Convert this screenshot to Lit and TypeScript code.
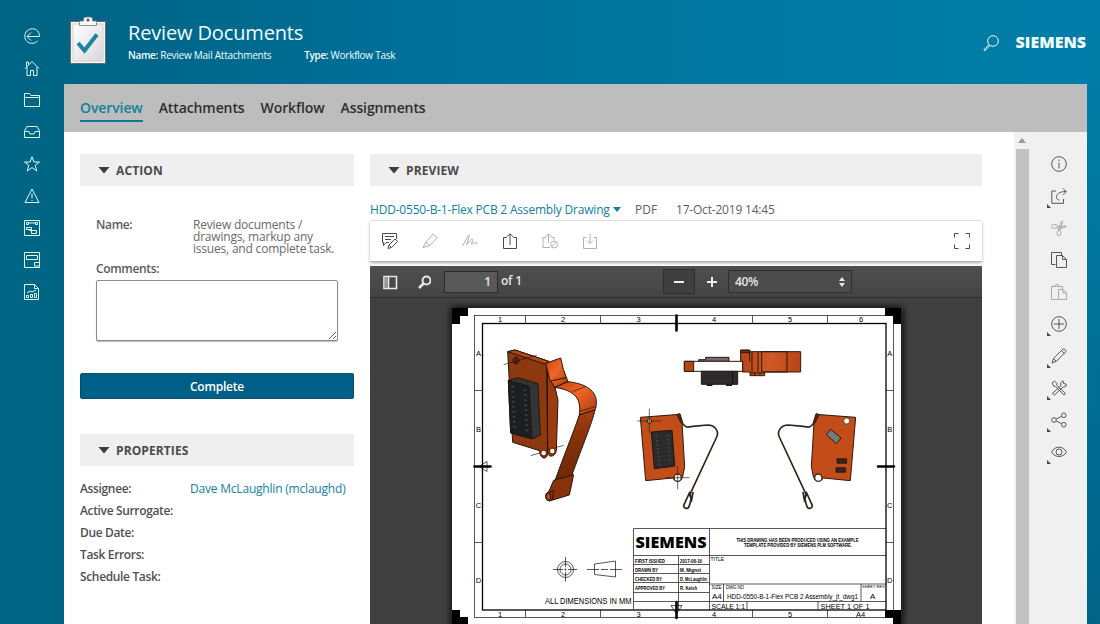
import { LitElement, html, css, svg } from "lit";
import { customElement, property } from "lit/decorators.js";

const icons: Record<string, unknown> = {
  back: svg`<path d="M3 8.5H15.3C15.8 4 12.5 .8 8.5 .8C4.300 .8 .8 4 .8 8.200C.8 12.500 4 15.300 8 15.300C10.500 15.300 12.500 14.300 13.800 12.800M7 4.500L3 8.500L7 12.500"/>`,
  home: svg`<path d="M1 8.500L8 1.500L15 8.500M3 7V15.500H6.500V10.500H9.500V15.500H13V7M2.500 6.500V2H4.500V4.500"/>`,
  folder: svg`<path d="M.5 14.500V1.500H5.500L7 3.500H15.500V14.500ZM.5 5.500H15.500"/>`,
  inbox: svg`<path d="M.5 13.500V7L3 2.500H13L15.500 7V13.500ZM.5 7.500H5L6 10H10L11 7.500H15.500"/>`,
  star: svg`<path d="M8 .8L10 6H15.500L11.200 9.300L12.800 15L8 11.600L3.200 15L4.800 9.300L.5 6H6Z"/>`,
  warn: svg`<path d="M8 1L15 14.500H1ZM8 5.500V10.500M8 12V13"/>`,
  flow: svg`<path d="M.5 .5H15.500V15.500H.5ZM4 3H12M2.500 2.500H4.500V4.500H2.500ZM11.500 2.500H13.500V4.500H11.500ZM2.500 7.500H7.500V9.500H2.500ZM5.500 9.500V10.500H10M7.500 10.500H12.500V13.500H7.500Z"/>`,
  card: svg`<path d="M.5 .5H15.500V15.500H.5ZM2.500 3.500H13.500V7.500H2.500ZM10.500 10.500H15.500V14H10.500Z"/>`,
  report: svg`<path d="M.5 .5H10.500L14.500 4.500V15.500H.5ZM10.500 .5V4.500H14.500M2.500 11.500H4.500V13.500H2.500ZM6.500 10.500H8.500V13.500H6.500ZM10.500 9.500H12.500V13.500H10.500ZM3 9L6 7L8 8L12 6"/>`,
  search: svg`<circle cx="10" cy="6" r="5.300"/><path d="M6 9.500L.8 15L1.800 15.800L7 10.600"/>`,
  info: svg`<circle cx="8" cy="8" r="7.300"/><path d="M8 6.500V12.500M8 3.500V5"/>`,
  shareout: svg`<path d="M5 3H.8V15.300H12.500V11M15 3.500C8 3.500 5 6.500 5.500 9.500C5.700 11 7 12 8.500 12M12 .5L15.300 3.500L12 6.800"/>`,
  cut: svg`<ellipse cx="3.500" cy="6.500" rx="3" ry="2"/><ellipse cx="8" cy="13" rx="2" ry="2.700"/><path d="M6.500 6.500L15.500 6L14 7.500L6 8.500M7.500 10.500L9.500 3L11.500 .8L11 4L9 10.500"/>`,
  copy: svg`<path d="M4.500 12.500H.5V.5H10.500V3.500M5.500 3.500H11.500L15.500 7.500V15.500H5.500ZM11.500 3.500V7.500H15.500"/>`,
  paste: svg`<path d="M7 15.500H.5V2.500H3.500M8.500 2.500H11.500V5M3 2.500L4.500 .7H7.500L9 2.500ZM7.500 5.500H12L15.500 9V15.500H7.500ZM12 5.500V9H15.500"/>`,
  add: svg`<circle cx="8" cy="8" r="7.300"/><path d="M8 3V13M3 8H13"/>`,
  edit: svg`<path d="M1 15L2.500 10.500L12 1C13 .2 15.500 2.500 14.800 3.800L5.300 13.300ZM2.500 10.500L5.300 13.300M10.500 2.500L13.300 5.300"/>`,
  tools: svg`<path d="M1 3L3.500 1L6 3.500L5.500 5L14.500 13.500L13 15L4.500 6.500L3 6.500ZM10 6.500L9.500 3L12 .8L12.500 3.500L15 4L15.300 6L11.500 7.500L3.500 15L1.300 13.500L9.500 6"/>`,
  nodes: svg`<circle cx="3" cy="8" r="2.300"/><circle cx="12.800" cy="3.300" r="2.300"/><circle cx="12.800" cy="12.700" r="2.300"/><path d="M5.200 7L10.700 4.300M5.200 9L10.700 11.700"/>`,
  eye: svg`<path d="M.5 8C4 1.500 12 1.500 15.500 8C12 14 4 14 .5 8Z"/><circle cx="8" cy="8" r="3"/>`,
  note: svg`<path d="M7 9.500H4L1.500 12.500V9.500H.5V.5H14.500V6M3 3.500H12M3 6.500H9M6 15.500L7 12L13 6L15.500 8.500L9.500 14.500ZM7 12L9.500 14.500"/>`,
  marker: svg`<path d="M1 14.500L4 9L11 1L15 4.500L8 12.500L1 14.500ZM4 9L8 12.500"/>`,
  ink: svg`<path d="M.5 13L6 3C7 1.500 8 2 7 4.500L4.500 12L9 6.500C10 5.500 11 6 10.500 7.500L9.500 11C10 12 12 8.500 13 9C13.500 9.500 13 11 14 11L15.500 10"/>`,
  up: svg`<path d="M4.500 4.500H1.500V15.500H14.500V4.500H11.500M8 12V1M4.500 4L8 .8L11.500 4"/>`,
  upblock: svg`<path d="M4 4.500H1V14.500H8M6.500 10V1M3.500 4L6.500 .8L9.500 4M9.500 4.500H12V7"/><circle cx="12" cy="11.500" r="3.500"/><path d="M9.500 14L14.500 9"/>`,
  down: svg`<path d="M4.500 4.500H1.500V15.500H14.500V4.500H11.500M8 .5V10M5 7.500L8 10.500L11 7.500"/>`,
  full: svg`<path d="M.5 4.500V.5H4.500M11.500 .5H15.500V4.500M15.500 11.500V15.500H11.500M4.500 15.500H.5V11.500"/>`,
};

@customElement("ui-icon")
class UiIcon extends LitElement {
  @property() name = "";
  static styles = css`
    :host { display: block; width: 16px; height: 16px; flex: none; }
    svg { display: block; width: 16px; height: 16px; overflow: visible; fill: none; stroke: currentColor; stroke-width: 1; }
  `;
  render() {
    return html`<svg viewBox="0 0 16 16">${icons[this.name]}</svg>`;
  }
}

@customElement("assembly-drawing")
class AssemblyDrawing extends LitElement {
  static styles = css`
    :host { display: block; }
    svg { display: block; width: 612px; height: 326px; }
    text { font-family: "Liberation Sans", Arial, sans-serif; fill: #000; }
    .zone { font-size: 7.5px; text-anchor: middle; }
    .brand { font-family: "Open Sans", sans-serif; font-weight: 800; }
    .cell { font-size: 4.600px; font-weight: 700; }
    .hair { fill: none; stroke: #111; stroke-width: .7; }
    .heavy { fill: none; stroke: #000; stroke-width: 1.300; }
  `;
  render() {
    const zones = [[500, "1"], [563, "2"], [638.500, "3"], [714, "4"], [790, "5"]] as const;
    const rows = [[353, "A"], [429, "B"], [504.500, "C"], [580, "D"]] as const;
    const cells = [
      [562.500, "FIRST ISSUED", 30, "2017-08-16", 22],
      [571.500, "DRAWN BY", 23, "M. Mignot", 21],
      [580.500, "CHECKED BY", 27, "D. McLaughlin", 27],
      [589.500, "APPROVED BY", 30, "R. Kelsh", 17],
    ] as const;
    return html`<svg viewBox="370 298 612 326">
      <defs>
        <linearGradient id="bend" x1="0" y1="0" x2="1" y2="1"><stop offset="0" stop-color="#c2410c"/><stop offset=".45" stop-color="#f0662a"/><stop offset="1" stop-color="#a83a0b"/></linearGradient>
        <linearGradient id="arm" x1="0" y1="0" x2="0" y2="1"><stop offset="0" stop-color="#a8400f"/><stop offset=".3" stop-color="#8a340b"/><stop offset="1" stop-color="#6b2806"/></linearGradient>
        <linearGradient id="band" x1="0" y1="0" x2="1" y2="0"><stop offset="0" stop-color="#b84414"/><stop offset=".5" stop-color="#d05a26"/><stop offset="1" stop-color="#b84414"/></linearGradient>
        <filter id="shade" x="-5%" y="-5%" width="110%" height="110%"><feGaussianBlur stdDeviation="3"/></filter>
      </defs>
      <rect x="451" y="307" width="452" height="320" fill="#111" filter="url(#shade)"/>
      <rect x="452" y="308" width="449" height="318" fill="#fff"/>
      <path d="M452 308H468V316H460V324H452ZM901 308V324H893V316H885V308ZM452 610H460V617H468V626H452ZM901 610H885V618H893V626H901Z"/>
      <rect class="hair" x="474.500" y="315.500" width="419" height="302"/>
      <rect class="heavy" x="482.500" y="323.500" width="403.500" height="286.500"/>
      <path class="hair" d="M525.500 315.500V323M600.500 315.500V323M752.500 315.500V323M827.500 315.500V323M525.500 610V617M600.500 610V617M752.500 610V617M827.500 610V617M474.500 390.500H482M474.500 542.500H482M886 390.500H893M886 542.500H893"/>
      <path d="M676.500 315.500V330.500M474.500 466.500H490.500M878 466.500H894M676.500 602V618" stroke="#000" stroke-width="2.600" stroke-linecap="round"/>
      <path class="hair" d="M479 466.500L487 461.500V471.500ZM671 605.500H682L676.500 614Z" stroke-width="1"/>
      ${zones.map(([x, t]) => svg`<text class="zone" x=${x} y="322">${t}</text><text class="zone" x=${x} y="616.500">${t}</text>`)}
      <text class="zone" x="861" y="322">6</text><text class="zone" x="860.500" y="616.500">A4</text>
      ${rows.map(([y, t]) => svg`<text class="zone" x="478.500" y=${y + 3}>${t}</text><text class="zone" x="889.800" y=${y + 3}>${t}</text>`)}

      <g transform="translate(440 300) scale(.33333)" stroke="#25150c" stroke-width="3" stroke-linejoin="round">
        <path d="M320 186L345 262L354 300L349 450C348 472 322 475 323 455Z" fill="#9a3c0e"/>
        <path d="M203 155L225 150L322 183L323 462C318 485 298 472 299 452L218 427Z" fill="#8d390f"/>
        <path d="M203 155L225 150L327 184L320 194Z" fill="#b8480f"/>
        <path d="M320 186L323 460" fill="none"/>
        <circle cx="311" cy="459" r="9" fill="#fff" stroke="#7a3210" stroke-width="5"/>
        <circle cx="337" cy="453" r="9" fill="#fff" stroke="#7a3210" stroke-width="5"/>
        <circle cx="228" cy="182" r="9" fill="#702b0b"/>
        <path d="M191 194L290 166M272 467L300 459M346 443L371 436M228 168V196" fill="none" stroke-width="2"/>
        <path d="M205 241L233 233L294 251L301 404L278 417L212 399Z" fill="#303538"/>
        <path d="M205 241L267 259L276 416L212 399Z" fill="#1c1f21"/>
        <path d="M218 258L224 388M254 268L262 400" stroke="#3c4144" stroke-width="8" stroke-dasharray="5 10"/>
        <path d="M317 190L362 174L370 208L384 245L344 262L329 238Z" fill="url(#bend)"/>
        <path d="M331 243L379 233" fill="none"/>
        <path d="M344 262L384 245C440 251 469 274 469 306C469 318 468 324 465 330L418 345C424 300 410 272 344 262Z" fill="url(#bend)"/>
        <path d="M397 275L436 260M419 334L466 320" fill="none" stroke-width="2"/>
        <path d="M418 345L465 330C456 370 430 430 393 533L343 548C370 470 396 410 418 345Z" fill="url(#arm)"/>
        <path d="M341 541L391 527L401 524L388 585L328 603C314 602 313 578 326 576Z" fill="#87330c"/>
        <path d="M326 577L341 572L337 600" fill="none"/>
        <ellipse cx="325" cy="590" rx="7" ry="11" fill="#b84a1a"/>
      </g>

      <g transform="translate(670 300) scale(.33333)" stroke="#2b1a10" stroke-width="3">
        <path d="M86 184V179H107V172H177V184Z" fill="#6d6d6d"/>
        <path d="M43 184H218V214H43Z" fill="#fff"/><path d="M43 184H71V214H43Z" fill="#b64512"/>
        <path d="M94 214H203V253H94Z" fill="#2d2b2b"/><path d="M110 255H127M168 255H186" stroke-width="6"/>
        <path d="M188 214V253" stroke="#111"/>
        <path d="M212 150H239V155H392V216H284V227H240V216H218V184H212Z" fill="url(#band)"/>
        <path d="M275 155H351V216H275ZM246 155V216M264 155V216M240 219H284M254 218V227M270 218V227M239 155V185" fill="none"/>
        <path d="M212 151H239V158H212Z" fill="#74310f"/>
      </g>

      <g transform="translate(670 300) scale(.33333)" stroke-linejoin="round">
        <g id="leaf">
          <path d="M437 343L557 352L541 542L460 534A16 16 0 0 1 430 530L424 500L432 367Z" fill="#c24d19" stroke="#2b1a10" stroke-width="3"/>
          <path d="M429 367L440 340L448 344L435 370Z" fill="#4c2815" stroke="#2b1a10" stroke-width="2"/>
          <path d="M431 370C420 385 415 382 400 379L355 375C333 375 320 394 328 411L410 587" fill="none" stroke="#30241d" stroke-width="5"/>
          <path d="M399 578L411 620A8 8 0 0 0 426 614L409 577L404 604Z" fill="#fff" stroke="#30241d" stroke-width="5"/>
        </g>
        <circle cx="530" cy="363" r="9" fill="#fff" stroke="#2b1a10" stroke-width="2"/>
        <circle cx="445" cy="533" r="11" fill="#fff" stroke="#4d2913" stroke-width="4"/>
        <path d="M482 388L513 414L500 431L469 404Z" fill="#747b7e" stroke="#2b1a10" stroke-width="3"/>
        <path d="M501 476H530V490H501ZM498 503H527V517H498Z" fill="#332620" stroke="#1c120d" stroke-width="2"/>
      </g>
      <g transform="translate(826 300) scale(-.33333 .33333)" stroke-linejoin="round">
        <path d="M437 343L557 352L541 542L460 534A16 16 0 0 1 430 530L424 500L432 367Z" fill="#c24d19" stroke="#2b1a10" stroke-width="3"/>
        <path d="M429 367L440 340L448 344L435 370Z" fill="#4c2815" stroke="#2b1a10" stroke-width="2"/>
        <path d="M431 370C420 385 415 382 400 379L355 375C333 375 320 394 328 411L410 587" fill="none" stroke="#30241d" stroke-width="5"/>
        <path d="M399 578L411 620A8 8 0 0 0 426 614L409 577L404 604Z" fill="#fff" stroke="#30241d" stroke-width="5"/>
        <circle cx="530" cy="363" r="7" fill="#d4dca8" stroke="#2b1a10" stroke-width="3"/>
        <circle cx="445" cy="533" r="11" fill="#fff" stroke="#4d2913" stroke-width="4"/>
        <path d="M462 391L524 396L515 506L454 498Z" fill="#2c2b2b" stroke="#1a1410" stroke-width="3"/>
        <path d="M475 405L467 490M508 408L500 495" stroke="#4a4a4a" stroke-width="6" stroke-dasharray="4 8"/>
        <path d="M445 498V568M410 533H480M530 326V400M494 363H566" stroke="#222" stroke-width="2"/>
      </g>

      <g class="hair">
        <circle cx="565.500" cy="569.500" r="8"/><circle cx="565.500" cy="569.500" r="5.500"/>
        <path d="M553 569.500H563M564.500 569.500H566.500M568 569.500H577M565.500 557V567M565.500 568.500V570.500M565.500 572V581.500M594.500 564L615.500 561V577L594.500 574.500ZM587 569.500H599M601 569.500H608M610 569.500H622"/>
      </g>
      <text x="545" y="604" font-size="8.200" textLength="86.500" lengthAdjust="spacingAndGlyphs">ALL DIMENSIONS IN MM</text>

      <path class="hair" d="M633.500 609V528.500H886M709.500 528.500V610M633.500 555.500H886M633.500 564.500H709M633.500 573.500H709M633.500 582.500H709M633.500 592.500H709M633.500 601.500H886M678.500 555.500V610M709.500 584H886M723.500 584V601.500M861 584V601.500M747 601.500V610M818 601.500V610"/>
      <text class="brand" x="635.500" y="548" font-size="15.500" textLength="71" lengthAdjust="spacingAndGlyphs">SIEMENS</text>
      <text class="cell" x="736.500" y="541.500" textLength="122" lengthAdjust="spacingAndGlyphs">THIS DRAWING HAS BEEN PRODUCED USING AN EXAMPLE</text>
      <text class="cell" x="744" y="546.800" textLength="108" lengthAdjust="spacingAndGlyphs">TEMPLATE PROVIDED BY SIEMENS PLM SOFTWARE.</text>
      ${cells.map(([y, a, aw, b, bw]) => svg`<text class="cell" x="635" y=${y} textLength=${aw} lengthAdjust="spacingAndGlyphs">${a}</text><text class="cell" x="680" y=${y} textLength=${bw} lengthAdjust="spacingAndGlyphs">${b}</text>`)}
      <text x="710.500" y="561" font-size="5">TITLE</text>
      <text x="711.500" y="588.500" font-size="4.500">SIZE</text>
      <text x="726" y="588.500" font-size="4.500" textLength="18">DWG NO</text>
      <text x="862" y="588.300" font-size="4.200" textLength="23" lengthAdjust="spacingAndGlyphs">SHEET REV</text>
      <text x="712" y="599" font-size="8">A4</text>
      <text x="727" y="599" font-size="8" textLength="131" lengthAdjust="spacingAndGlyphs">HDD-0550-B-1-Flex PCB 2 Assembly_jt_dwg1</text>
      <text x="870" y="599" font-size="8">A</text>
      <text x="711.500" y="608.500" font-size="8" textLength="33.500" lengthAdjust="spacingAndGlyphs">SCALE 1:1</text>
      <text x="820.500" y="608.500" font-size="8" textLength="49" lengthAdjust="spacingAndGlyphs">SHEET 1 OF 1</text>
    </svg>`;
  }
}

@customElement("app-root")
class AppRoot extends LitElement {
  static styles = css`
    :host { display: block; width: 1100px; height: 624px; overflow: hidden; font-family: "Open Sans", "Noto Sans", sans-serif; font-size: 12px; color: #464646; }
    * { box-sizing: border-box; }
    .app { display: grid; grid-template-columns: 64px 1023px 13px; width: 1100px; height: 624px;
      background: linear-gradient(90deg, #006485 0, #006485 70px, #007099 420px, #007ba5 900px, #007ea9 1100px); }
    .rail { display: flex; flex-direction: column; padding-top: 20px; color: #dcfbff; }
    .slot { height: 32px; display: flex; align-items: center; padding-left: 24px; }
    .edge { background: linear-gradient(#007ea9, #007aa3 25%, #006a92 75%, #006487); }
    .main { display: grid; grid-template-rows: 84px 48px 492px; }
    .top { display: flex; align-items: flex-start; color: #f0feff; }
    .clip { width: 36px; height: 48px; margin: 16px 0 0 6px; }
    .titles { margin: 18px 0 0 22px; flex: 1; white-space: nowrap; }
    .title { font-size: 20px; line-height: 30px; letter-spacing: -.15px; }
    .meta { display: flex; gap: 33px; font-size: 10px; line-height: 15px; letter-spacing: -.25px; }
    .meta b { font-weight: 600; letter-spacing: -.35px; }
    .top ui-icon { margin: 35px 17px 0 0; }
    .logo { font-size: 16px; line-height: 20px; font-weight: 800; letter-spacing: 0; margin: 32px 1px 0 0; }
    .tabs { background: #bdbdbd; display: flex; padding: 13px 16px 0; gap: 16px; font-size: 14px; line-height: 22px; font-weight: 600; color: #2e2e2e; letter-spacing: -.1px; }
    .tab { height: 25px; white-space: nowrap; }
    .tab.on { color: #12809c; border-bottom: 2px solid #0b7898; }
    .work { display: grid; grid-template-columns: 950px 16px 57px; background: #fff; }
    .body { display: grid; grid-template-columns: 274px 612px; column-gap: 16px; padding: 22px 16px 0; align-content: start; }
    .head { height: 32px; background: #efefef; display: flex; align-items: center; padding-left: 18px; gap: 6px; font-size: 12px; font-weight: 700; letter-spacing: .1px; color: #4a4a4a; }
    .tri { width: 12px; height: 7px; background: #3c3c3c; clip-path: polygon(0 0, 100% 0, 50% 100%); margin-right: 0; }
    .name { display: grid; grid-template-columns: 97px 150px; padding: 33px 0 0 16px; line-height: 12px; letter-spacing: -.2px; color: #6a6a6a; white-space: nowrap; }
    .lab { font-weight: 600; color: #5a5a5a; letter-spacing: -.35px; }
    .comments { padding: 8px 0 0 16px; line-height: 12px; }
    textarea { display: block; width: 242px; height: 61px; margin: 5px 0 0; border: 1px solid #8c8c8c; border-radius: 2px; box-shadow: 0 1px 1px #bbb; background: #fff; resize: both; padding: 2px; outline: none; }
    .btn { height: 26px; margin: 32px 0 35px; background: #005f87; border: 1px solid #00506f; border-radius: 2px; color: #fff; text-align: center; font-size: 12px; line-height: 25px; font-weight: 600; letter-spacing: -.2px; }
    .props { padding-top: 12px; line-height: 22px; letter-spacing: -.2px; }
    .prop { display: grid; grid-template-columns: 110px auto; white-space: nowrap; }
    .prop .lab { color: #505050; }
    .link { color: #1482a0; }
    .file { height: 35px; padding-top: 15px; display: flex; border-bottom: 1px solid #e8e8e8; line-height: 18px; white-space: nowrap; color: #606060; }
    .fname { color: #117f9e; letter-spacing: -.2px; width: 243px; }
    .caret { width: 8px; height: 5px; background: #117f9e; clip-path: polygon(0 0, 100% 0, 50% 100%); margin: 6px 14px 0 0; }
    .kind { width: 41px; }
    .date { letter-spacing: -.2px; }
    .tools { height: 41px; display: flex; align-items: center; padding: 0 12px; gap: 24px; border-bottom: 1px solid #b8b8b8; box-shadow: 0 1px 3px #aaa; color: #4a4a4a; }
    .tools .off { color: #b0b0b0; }
    .tools .last { margin-left: auto; }
    .viewer { margin-top: 4px; background: #404040; height: 358px; overflow: hidden; }
    .bar { height: 32px; display: flex; align-items: center; background: linear-gradient(#4f4f4f, #444); border-bottom: 1px solid #2e2e2e; color: #e6e6e6; font-weight: 600; position: relative; }
    .bar svg { display: block; flex: none; }
    .page { width: 54px; height: 22px; margin-left: 13px; border: 1px solid #2d2d2d; background: #595959; text-align: right; padding-right: 6px; line-height: 19px; }
    .of { margin-left: 3px; letter-spacing: -.2px; width: 162px; margin-top: -2px; }
    .minus { width: 32px; height: 25px; border: 1px solid #2d2d2d; background: #3f3f3f; display: grid; place-items: center; }
    .plus { width: 33px; display: grid; place-items: center; }
    .zoom { width: 124px; height: 23px; border: 1px solid #303030; background: #4b4b4b; display: flex; align-items: center; justify-content: space-between; padding: 0 6px; line-height: 20px; letter-spacing: -.4px; }
    .scroll { background: #f1f1f1; padding: 6px 1px 0 2px; }
    .arrow { height: 5px; width: 8px; margin: 0 0 6px 2px; background: #999; clip-path: polygon(50% 0, 100% 100%, 0 100%); }
    .thumb { height: 475px; background: #c1c1c1; }
    .acts { background: #f0f0f0; padding: 16px 0 0 21px; color: #555; }
    .act { height: 32px; display: flex; align-items: center; position: relative; }
    .act.off { color: #aaa; }
    .act.more::after { content: ""; position: absolute; left: -4px; top: 24px; width: 4px; height: 4px; background: #444; clip-path: polygon(0 0, 100% 100%, 0 100%); }
  `;

  render() {
    const rail = ["back", "home", "folder", "inbox", "star", "warn", "flow", "card", "report"];
    const acts: [string, string][] = [["info", ""], ["shareout", "more"], ["cut", "off"], ["copy", ""], ["paste", "off"], ["add", "more"], ["edit", "more"], ["tools", "more"], ["nodes", "more"], ["eye", "more"]];
    const tabs = ["Overview", "Attachments", "Workflow", "Assignments"];
    const props: [string, string][] = [["Assignee:", "Dave McLaughlin (mclaughd)"], ["Active Surrogate:", ""], ["Due Date:", ""], ["Task Errors:", ""], ["Schedule Task:", ""]];
    const tools: [string, string][] = [["note", ""], ["marker", "off"], ["ink", "off"], ["up", ""], ["upblock", "off"], ["down", "off"], ["full", "last"]];
    return html`<div class="app">
      <nav class="rail">${rail.map((n) => html`<div class="slot"><ui-icon name=${n}></ui-icon></div>`)}</nav>
      <div class="main">
        <header class="top">
          <svg class="clip" viewBox="0 0 36 48">
            <defs><linearGradient id="paper" x1="0" y1="0" x2="1" y2="1"><stop offset="0" stop-color="#fff"/><stop offset="1" stop-color="#d8d8d8"/></linearGradient></defs>
            <rect x=".5" y="5.500" width="35" height="42" fill="#f4f4f4" stroke="#6b6b6b"/>
            <rect x="3" y="8" width="30" height="37" fill="url(#paper)" stroke="#c4c4c4" stroke-width=".7"/>
            <path d="M9.500 9.500V5H13.500V2.500Q14 1 16 1H20Q22 1 22.500 2.500V5H26.500V9.500Z" fill="#f7f7f7" stroke="#777" stroke-width=".8"/>
            <circle cx="18" cy="4" r="1.500" fill="#555"/>
            <path d="M8 27L14.500 34.500L27 18.500" fill="none" stroke="#1c84a0" stroke-width="4"/>
          </svg>
          <div class="titles">
            <div class="title">Review Documents</div>
            <div class="meta"><span><b>Name:</b> Review Mail Attachments</span><span><b>Type:</b> Workflow Task</span></div>
          </div>
          <ui-icon name="search"></ui-icon>
          <div class="logo">SIEMENS</div>
        </header>
        <div class="tabs">${tabs.map((t, i) => html`<div class="tab ${i ? "" : "on"}">${t}</div>`)}</div>
        <div class="work">
          <div class="body">
            <div class="left">
              <div class="head"><i class="tri"></i>ACTION</div>
              <div class="name"><span class="lab">Name:</span><span>Review documents /<br>drawings, markup any<br>issues, and complete task.</span></div>
              <div class="comments"><div class="lab">Comments:</div><textarea></textarea></div>
              <div class="btn">Complete</div>
              <div class="head"><i class="tri"></i>PROPERTIES</div>
              <div class="props">${props.map(([a, b]) => html`<div class="prop"><span class="lab">${a}</span><span class="link">${b}</span></div>`)}</div>
            </div>
            <div class="right">
              <div class="head"><i class="tri"></i>PREVIEW</div>
              <div class="file"><span class="fname">HDD-0550-B-1-Flex PCB 2 Assembly Drawing</span><i class="caret"></i><span class="kind">PDF</span><span class="date">17-Oct-2019 14:45</span></div>
              <div class="tools">${tools.map(([n, c]) => html`<ui-icon class=${c} name=${n}></ui-icon>`)}</div>
              <div class="viewer">
                <div class="bar">
                  <svg width="61" height="16" viewBox="0 0 61 16" fill="none" stroke="#e8e8e8" stroke-width="1.600"><path d="M14 2.500H26.500V14.500H14ZM18.500 2.500V14.500"/><path d="M14.500 3V14H18V3Z" fill="#999" stroke="none"/><circle cx="56.500" cy="6.500" r="4" stroke-width="2"/><path d="M53.500 9.500L49 14" stroke-width="2.600"/></svg>
                  <div class="page">1</div><div class="of">of 1</div>
                  <div class="minus"><svg width="12" height="12"><path d="M1 6H11" stroke="#eee" stroke-width="2"/></svg></div>
                  <div class="plus"><svg width="12" height="12"><path d="M1 6H11M6 1V11" stroke="#eee" stroke-width="2"/></svg></div>
                  <div class="zoom">40%<svg width="6" height="10"><path d="M0 4L3 0L6 4ZM0 6L3 10L6 6Z" fill="#e6e6e6"/></svg></div>
                </div>
                <assembly-drawing></assembly-drawing>
              </div>
            </div>
          </div>
          <div class="scroll"><div class="arrow"></div><div class="thumb"></div></div>
          <aside class="acts">${acts.map(([n, c]) => html`<div class="act ${c}"><ui-icon name=${n}></ui-icon></div>`)}</aside>
        </div>
      </div>
      <div class="edge"></div>
    </div>`;
  }
}
